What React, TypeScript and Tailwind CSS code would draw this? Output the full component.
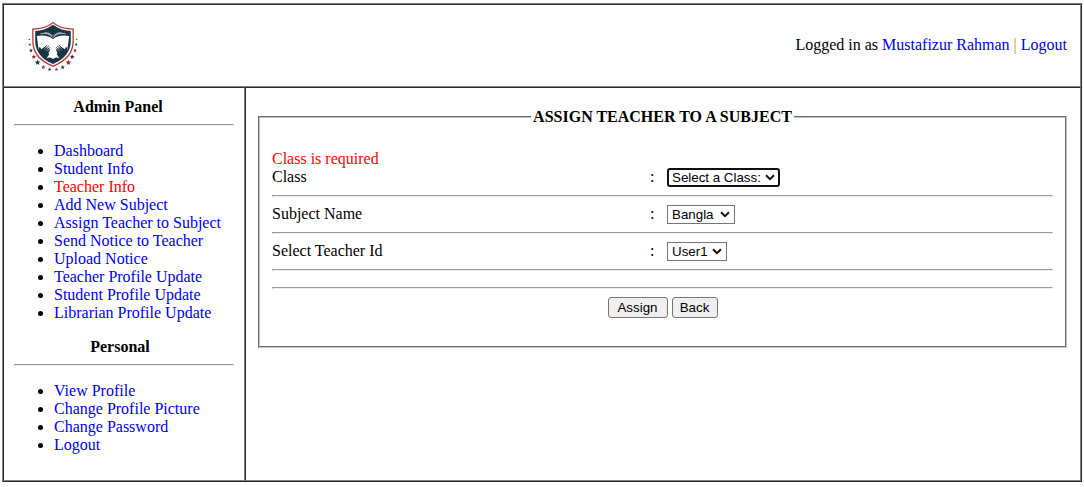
import React from "react";

const adminLinks = [
  "Dashboard",
  "Student Info",
  "Teacher Info",
  "Add New Subject",
  "Assign Teacher to Subject",
  "Send Notice to Teacher",
  "Upload Notice",
  "Teacher Profile Update",
  "Student Profile Update",
  "Librarian Profile Update",
];
const personalLinks = ["View Profile", "Change Profile Picture", "Change Password", "Logout"];

function Rule() {
  return <hr className="h-[2px] border border-t-[#9a9a9a] border-r-[#eeeeee] border-b-[#eeeeee] border-l-[#9a9a9a]" />;
}

const stars: [number, number, number, string][] = [
  [29.3, 38.3, 1, "#1c3545"], [29.8, 43.5, 1.5, "#a82b28"], [31, 49.5, 1.9, "#1c3545"],
  [33.8, 55.8, 2.3, "#a82b28"], [37.6, 61.5, 2.7, "#1c3545"], [43.3, 66.2, 2.1, "#a82b28"],
  [49.6, 68.5, 1.8, "#1c3545"], [56.4, 68.5, 1.8, "#a82b28"], [62.7, 66.2, 2.1, "#1c3545"],
  [68.4, 61.5, 2.7, "#a82b28"], [72.2, 55.8, 2.3, "#1c3545"], [75, 49.5, 1.9, "#a82b28"],
  [76.2, 43.5, 1.5, "#1c3545"], [76.7, 38.3, 1, "#a82b28"],
];

function BookHalf() {
  return (
    <>
      <path d="M53.1 38.2C49.5 34.6 43 33.8 36.8 35L38.6 48.5L45 50L49.5 53L46.6 57.2Q51 55.4 53.1 58.2Z" fill="#fff" />
      <path d="M40.5 32.7Q48.5 31.2 52.5 36.3M44.5 31.6Q49.5 31.5 52.7 34.9" fill="none" stroke="#fff" strokeWidth=".65" />
      <path d="M38.5 46.5L40.2 46.2L41.3 48.2L44.5 46L47 47L49.8 49.5L48.2 52.7L45.5 54.3L40.5 53.5Z" fill="#1c3545" />
      <path d="M42.5 48.3L46.8 44.5M44 49L48.6 45.2M45.5 50L49.5 46.7M46.5 51L49.8 48.4" stroke="#1c3545" strokeWidth=".95" strokeLinecap="round" />
      <path d="M43.8 48.3L46.4 46.2M45.2 49.3L48 47M46.3 50.4L49 48.3" stroke="#fff" strokeWidth=".35" />
    </>
  );
}

function Logo() {
  return (
    <svg width="66" height="62" viewBox="20 14 66 62" aria-hidden="true">
      <path d="M53 20.8C47 26 40 27.4 32.2 27.4V40C32.2 51 38 60 53 66C68 60 73.8 51 73.8 40V27.4C66 27.4 59 26 53 20.8Z" fill="#b43a35" />
      <path d="M53 22.3C47 27.2 40 28.6 33.5 28.6V40C33.5 50.5 39.5 59 53 64.6C66.5 59 72.5 50.5 72.5 40V28.6C66 28.6 59 27.2 53 22.3Z" fill="#fff" />
      <path d="M53 23.8C47 28.2 41 29.9 35.2 29.9V40C35.2 50 41 58 53 62.9C65 58 70.8 50 70.8 40V29.9C65 29.9 59 28.2 53 23.8Z" fill="#1c3545" />
      <BookHalf />
      <g transform="translate(106 0) scale(-1 1)">
        <BookHalf />
      </g>
      {stars.map(([x, y, r, fill], i) => (
        <path
          key={i}
          transform={`translate(${x} ${y}) scale(${r})`}
          d="M0-1.1L.3-.38 1.05-.34.46.14.65.89 0 .48-.65.89-.46.14-1.05-.34-.3-.38Z"
          fill={fill}
        />
      ))}
    </svg>
  );
}

function Menu({ items }: { items: string[] }) {
  return (
    <ul className="my-4 list-disc pl-10">
      {items.map((item) => (
        <li key={item} className="h-[18px] whitespace-nowrap">
          <a href="#" className={item === "Teacher Info" ? "text-[#ff0000]" : "text-[#0000ee]"}>{item}</a>
        </li>
      ))}
    </ul>
  );
}

function Select({ label, className }: { label: string; className: string }) {
  return (
    <button
      type="button"
      className={`flex h-[19px] items-center justify-between bg-white pl-1 pr-[4px] font-[Liberation_Sans,sans-serif] text-[13.333px] leading-[15px] whitespace-nowrap ${className}`}
    >
      <span>{label}</span>
      <svg width="10" height="7" viewBox="0 0 10 7" className="shrink-0" aria-hidden="true">
        <path d="M1 1.2L5 5.2L9 1.2" fill="none" stroke="#101010" strokeWidth="2" />
      </svg>
    </button>
  );
}

function Field({ label, children }: { label: string; children: React.ReactNode }) {
  return (
    <div className="flex h-[19px] items-center">
      <span className="w-[378px] pb-[2px]">{label}</span>
      <span className="w-[17px] pb-[2px]">:</span>
      {children}
    </div>
  );
}

const buttonClass =
  "h-[21px] rounded-[3px] border border-[#767676] bg-[#efefef] font-[Liberation_Sans,sans-serif] text-[13.333px] leading-[15px]";

export default function App() {
  return (
    <div className="h-[487px] w-[1084px] bg-white pt-[3px] pl-[2px] font-[Liberation_Serif,serif] text-[16px] leading-[18px] text-black">
      <div className="flex h-[479px] w-[1080px] flex-col border border-[#808080] border-r-[#2c2c2c] border-b-[#2c2c2c]">
        <header className="flex h-[83px] items-center justify-between border border-t-[#2c2c2c] border-r-[#808080] border-b-[#808080] border-l-[#2c2c2c] pr-[13px] pl-[16px]">
          <Logo />
          <p className="pb-[2px]">
            Logged in as <a href="#" className="text-[#0000ee]">Mustafizur Rahman</a> <span className="text-[#d98a3a]">|</span>{" "}
            <a href="#" className="text-[#0000ee]">Logout</a>
          </p>
        </header>
        <div className="flex min-h-0 flex-1">
          <aside className="w-[242px] border border-t-[#2c2c2c] border-r-[#808080] border-b-[#808080] border-l-[#2c2c2c] pt-[10px] pr-[10px] pl-[10px]">
            <h2 className="mb-2 pr-[12px] text-center font-bold">Admin Panel</h2>
            <Rule />
            <Menu items={adminLinks} />
            <h2 className="mb-2 pr-[8px] text-center font-bold">Personal</h2>
            <Rule />
            <Menu items={personalLinks} />
          </aside>
          <main className="flex-1 border border-t-[#2c2c2c] border-r-[#808080] border-b-[#808080] border-l-[#2c2c2c] pt-[20px] pr-[13px] pl-[12px]">
            <fieldset className="h-[240px] border-2 border-[#c0c0c0] [border-style:groove] px-3">
              <legend className="mx-auto px-[2px] font-bold">ASSIGN TEACHER TO A SUBJECT</legend>
              <p className="mt-[24px] text-[#ff0000]">Class is required</p>
              <Field label="Class">
                <Select label="Select a Class:" className="w-[113px] rounded-[3px] border-2 border-[#101010] !pl-[3px] !pr-[3px]" />
              </Field>
              <div className="mt-[8px] mb-2"><Rule /></div>
              <Field label="Subject Name">
                <Select label="Bangla" className="w-[68px] border border-[#767676]" />
              </Field>
              <div className="my-2"><Rule /></div>
              <Field label="Select Teacher Id">
                <Select label="User1" className="w-[60px] border border-[#767676]" />
              </Field>
              <div className="my-2"><Rule /></div>
              <div className="mt-4 mb-2"><Rule /></div>
              <div className="flex justify-center gap-1">
                <button type="button" className={`w-[60px] ${buttonClass}`}>Assign</button>
                <button type="button" className={`w-[46px] ${buttonClass}`}>Back</button>
              </div>
            </fieldset>
          </main>
        </div>
      </div>
    </div>
  );
}
